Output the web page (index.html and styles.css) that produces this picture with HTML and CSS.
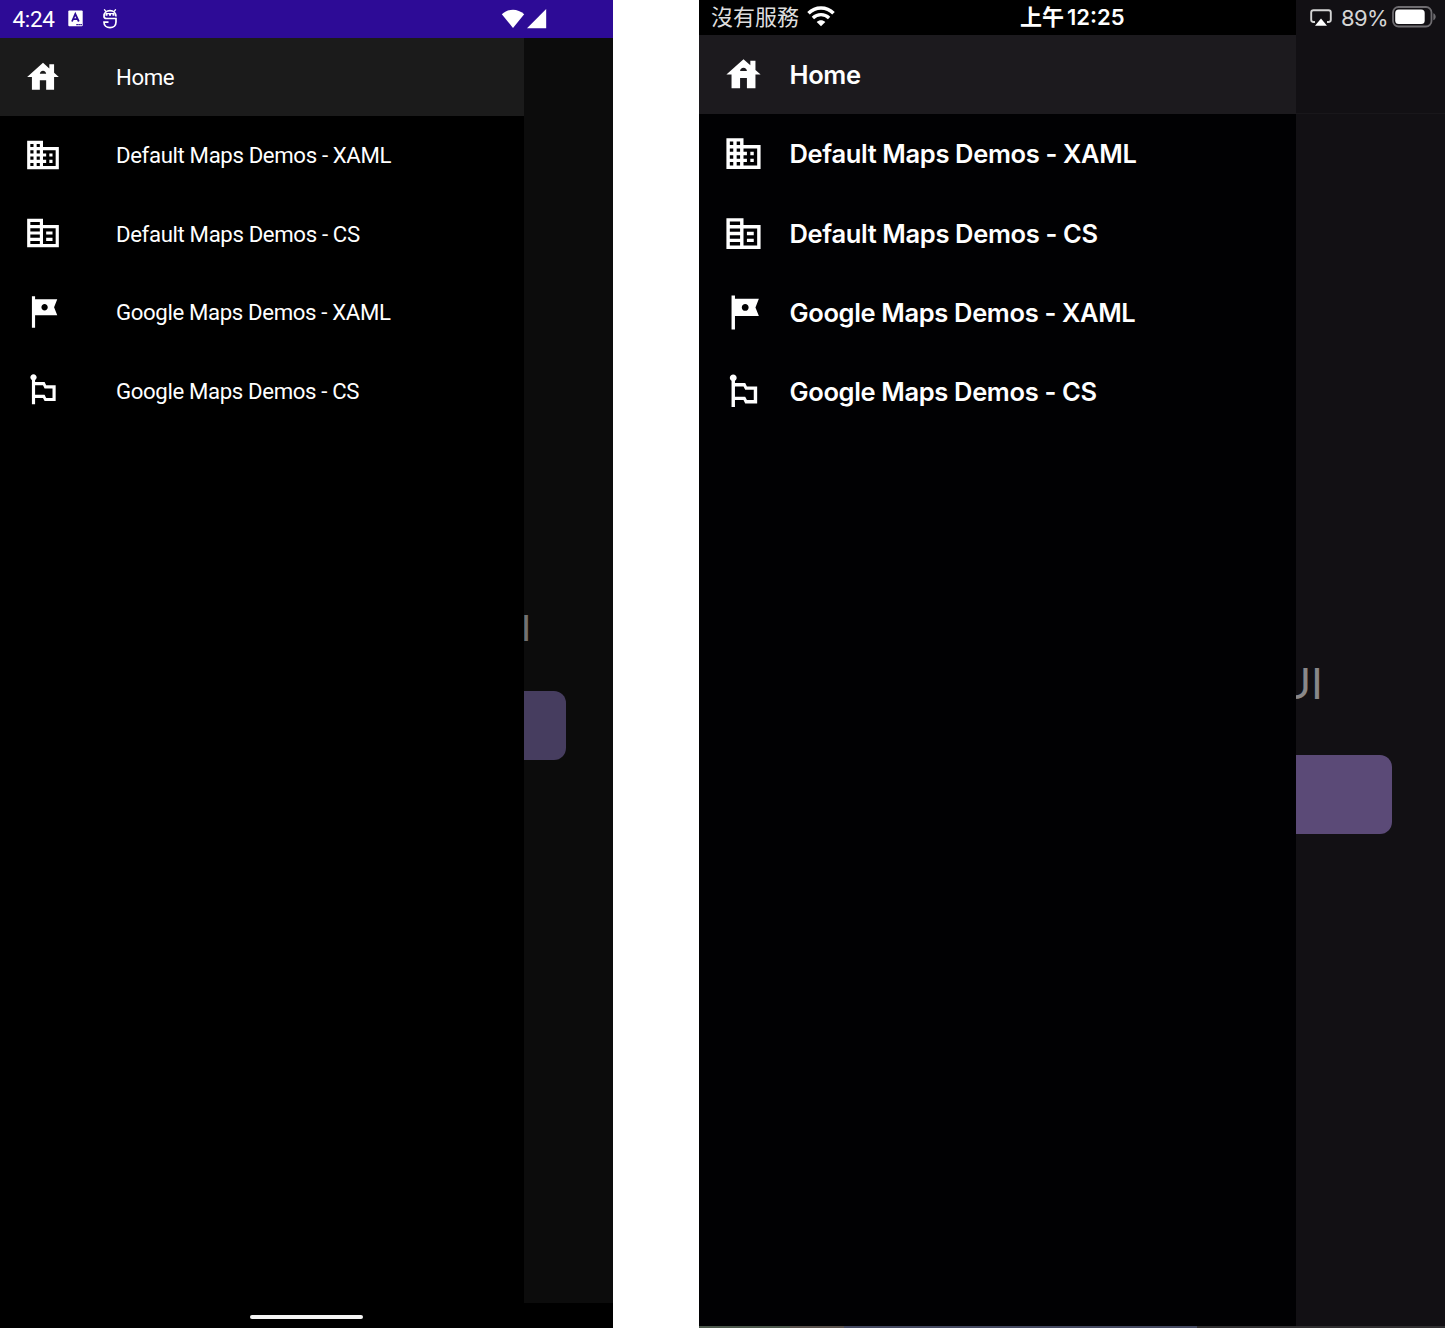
FILE: index.html
```html
<!DOCTYPE html>
<html lang="en">
<head>
<meta charset="utf-8">
<title>Maps Demos</title>
<link rel="stylesheet" href="styles.css">
</head>
<body>
<svg width="0" height="0" class="defs" aria-hidden="true">
  <symbol id="house" viewBox="0 0 24 24"><path d="M19 9.3V4h-3v2.6L12 3 2 12h3v8h5v-6h4v6h5v-8h3l-3-2.7zm-9 .7c0-1.1.9-2 2-2s2 .9 2 2h-4z"/></symbol>
  <symbol id="domain" viewBox="0 0 24 24"><path d="M12 7V3H2v18h20V7H12zM6 19H4v-2h2v2zm0-4H4v-2h2v2zm0-4H4V9h2v2zm0-4H4V5h2v2zm4 12H8v-2h2v2zm0-4H8v-2h2v2zm0-4H8V9h2v2zm0-4H8V5h2v2zm10 12h-8v-2h2v-2h-2v-2h2v-2h-2V9h8v10zm-2-8h-2v2h2v-2zm0 4h-2v2h2v-2z"/></symbol>
  <symbol id="corporate" viewBox="0 0 24 24"><path d="M12 7V3H2v18h20V7H12zM10 19H4v-2h6v2zm0-4H4v-2h6v2zm0-4H4V9h6v2zm0-4H4V5h6v2zm10 12h-8V9h8v10zm-2-8h-4v2h4v-2zm0 4h-4v2h4v-2z"/></symbol>
  <symbol id="tour" viewBox="0 0 24 24"><path d="M21 4H7V2H5v20h2v-8h14l-2-5 2-5zm-6 5c0 1.1-.9 2-2 2s-2-.9-2-2 .9-2 2-2 2 .9 2 2z"/></symbol>
  <symbol id="flags" viewBox="0 0 24 24"><path d="M14 9l-1-2H7V5.72C7.6 5.38 8 4.74 8 4c0-1.1-.9-2-2-2s-2 .9-2 2c0 .74.4 1.38 1 1.72V21h2v-4h5l1 2h7V9h-6zm4 8h-4l-1-2H7V9h5l1 2h5v6z"/></symbol>
</svg>
<main class="screens">
  <section class="phone android">
    <header class="status">
      <span class="clock">4:24</span>
      <svg class="app-badge" width="15" height="17" viewBox="0 0 15 17"><rect x=".3" y=".5" width="14.4" height="15.8" rx="1" fill="#fff"/><path d="M4 11.5 7.3 4l3.5 7.5M5.3 9.2h4.2" fill="none" stroke="#2d0b96" stroke-width="1.8"/><path d="M8.3 14.6h6" stroke="#2d0b96" stroke-width="1.4" stroke-dasharray="1.6 .4"/></svg>
      <svg class="debug" width="16" height="20" viewBox="0 0 16 20" fill="none" stroke="#fff" stroke-width="1.7"><path d="M14 7.6C14 4 11.500 1.700 8 1.700S2 4 2 7.200c0 1.400.8 2.300 2.400 2.300H14v3.500c0 3.400-2.500 5.700-6 5.700S2 16.500 2 13.200h4.500"/><path d="M2.200.3 4 2.600M13.800.3 12 2.600" stroke-width="1.300"/><path d="M3.500 4.600h9M3.500 6h2M7 6h2M10.500 6h2" stroke-width="1.300"/></svg>
      <svg class="signal" width="46" height="20" viewBox="0 0 46 20" fill="#fff"><path d="M.8 5.300C7.500-.9 16.500-.9 23.200 5.300L12 18.900z"/><path d="M26 19.200 45.200 0v19.200z"/></svg>
    </header>
    <div class="body">
      <nav class="drawer">
        <a class="item selected"><svg><use href="#house"/></svg><span>Home</span></a>
        <a class="item"><svg><use href="#domain"/></svg><span>Default Maps Demos - XAML</span></a>
        <a class="item"><svg><use href="#corporate"/></svg><span>Default Maps Demos - CS</span></a>
        <a class="item"><svg><use href="#tour"/></svg><span>Google Maps Demos - XAML</span></a>
        <a class="item"><svg><use href="#flags"/></svg><span>Google Maps Demos - CS</span></a>
      </nav>
      <div class="page"><span class="title">I</span><div class="button"></div></div>
    </div>
    <footer class="gesture"><div class="handle"></div></footer>
  </section>
  <section class="phone ios">
    <header class="status">
      <div class="status-main">
        <span class="carrier">沒有服務</span>
        <svg class="wifi" width="28" height="21" viewBox="0 0 28 21" fill="none" stroke="#fff"><path d="M1.500 7.300C8.500.3 19.500.3 26.500 7.300" stroke-width="3.600"/><path d="M5.900 12c4.600-4.400 11.600-4.400 16.200 0" stroke-width="3.300"/><path d="M14 20.300 9.700 16c2.500-2.200 6.100-2.200 8.600 0z" fill="#fff" stroke="none"/></svg>
        <span class="time">上午<b>12:25</b></span>
      </div>
      <div class="status-side">
        <svg class="airplay" width="22" height="18" viewBox="0 0 22 18"><path d="M5 13H3.500C2 13 1.200 12.200 1.200 10.800V3.400C1.200 2 2 1.200 3.500 1.200h15c1.500 0 2.300.8 2.300 2.200v7.400c0 1.400-.8 2.200-2.300 2.200H17" fill="none" stroke="#d5d5d5" stroke-width="1.900"/><path d="m11 9.500 6 7.300H5z" fill="#fff"/></svg>
        <span class="percent">89%</span>
        <svg class="battery" width="44" height="22" viewBox="0 0 44 22"><rect x="1" y="1" width="38.500" height="19.500" rx="5.500" fill="none" stroke="#6e6c70" stroke-width="1.800"/><rect x="3.200" y="3.500" width="29.500" height="14.500" rx="3.500" fill="#fff"/><path d="M41.300 7.300c3.200 1.200 3.200 5.800 0 7z" fill="#6e6c70"/></svg>
      </div>
    </header>
    <div class="body">
      <nav class="drawer">
        <a class="item selected"><svg><use href="#house"/></svg><span>Home</span></a>
        <a class="item"><svg><use href="#domain"/></svg><span>Default Maps Demos - XAML</span></a>
        <a class="item"><svg><use href="#corporate"/></svg><span>Default Maps Demos - CS</span></a>
        <a class="item"><svg><use href="#tour"/></svg><span>Google Maps Demos - XAML</span></a>
        <a class="item"><svg><use href="#flags"/></svg><span>Google Maps Demos - CS</span></a>
      </nav>
      <div class="page"><div class="navbar"></div><span class="title">UI</span><div class="button"></div></div>
    </div>
    <footer class="edge"></footer>
  </section>
</main>
</body>
</html>
```
FILE: styles.css
```css
* { box-sizing: border-box; }
body { margin: 0; background: #fff; }
svg { display: block; flex: none; }
.defs { position: absolute; }
.screens { display: flex; justify-content: space-between; width: 1445px; height: 1328px; overflow: hidden; }
.phone { display: flex; flex-direction: column; background: #000; color: #fff; overflow: hidden; }
.body { display: flex; flex: 1; min-height: 0; }
.drawer { flex: none; background: #000; }
.item { display: flex; align-items: center; white-space: nowrap; }
.item svg { fill: #fff; }
.page { flex: 1; min-width: 0; overflow: hidden; display: flex; flex-direction: column; align-items: flex-start; }
.title { line-height: 1; color: #fff; }

.android { width: 613px; font-family: Roboto, sans-serif; }
.android .status { display: flex; align-items: center; height: 37.5px; padding: 0 66.500px 0 12.500px; background: #2d0b96; }
.clock { font-size: 22.500px; letter-spacing: -.3px; width: 55.500px; padding-top: 1px; }
.debug { margin-left: 19px; }
.signal { margin-left: auto; }
.android .drawer { width: 524.400px; }
.android .item { height: 78.400px; padding-left: 24px; gap: 54px; font-size: 22.200px; letter-spacing: -.36px; }
.android .item svg { width: 38px; height: 38px; }
.android .item span { padding-top: .6px; }
.android .selected { background: #1b1b1b; }
.android .page { background: #0c0c0c; }
.android .title { margin: 572px 0 0 -3.500px; height: 37px; font-size: 37px; opacity: .42; }
.android .button { width: 42px; height: 69px; margin-top: 44.500px; border-radius: 0 12px 12px 0; background: #463d5f; }
.gesture { display: flex; justify-content: center; height: 25px; padding-top: 11.500px; }
.handle { width: 113px; height: 4px; border-radius: 2px; background: #f5f5f5; }

.ios { width: 746px; font-family: Inter, "Noto Sans CJK TC", sans-serif; background: #010103; }
.ios .status { display: flex; height: 35.400px; }
.status-main { display: flex; align-items: center; width: 597px; padding-left: 12px; background: #000; }
.carrier { font-size: 22px; line-height: 35px; color: #ddd; width: 88px; white-space: nowrap; }
.wifi { margin-left: 8px; margin-top: -3px; }
.time { display: flex; align-items: center; gap: 3px; margin-left: 185px; font-size: 22px; font-weight: 600; line-height: 35px; white-space: nowrap; }
.time b { font-size: 22px; font-weight: 600; }
.status-side { display: flex; align-items: center; flex: 1; padding-left: 14px; background: #121014; }
.percent { width: 51px; padding-left: 9px; font-size: 22px; letter-spacing: -.6px; color: #d5d5d5; }
.battery { margin-left: 9px; margin-top: -2px; }
.ios .drawer { width: 597px; background: #010103; }
.ios .item { height: 79.300px; padding-left: 24.300px; gap: 25.200px; font-size: 25.500px; font-weight: 600; letter-spacing: -.35px; }
.ios .item svg { width: 41px; height: 41px; }
.ios .selected { height: 78.800px; background: #1c1a1e; }
.ios .page { background: #121014; }
.navbar { width: 100%; height: 79px; border-bottom: 1px solid #19171b; }
.ios .title { margin: 549px 0 0 -16.500px; height: 43px; font-size: 42.500px; opacity: .5; }
.ios .button { width: 95.500px; height: 79.500px; margin-top: 48.500px; border-radius: 0 12px 12px 0; background: #5b4a77; }
.edge { height: 2px; background: linear-gradient(90deg, #4d594d 0 91px, #5a524d 91px 145px, #454a62 145px 498px, #302f31 498px); }
```
